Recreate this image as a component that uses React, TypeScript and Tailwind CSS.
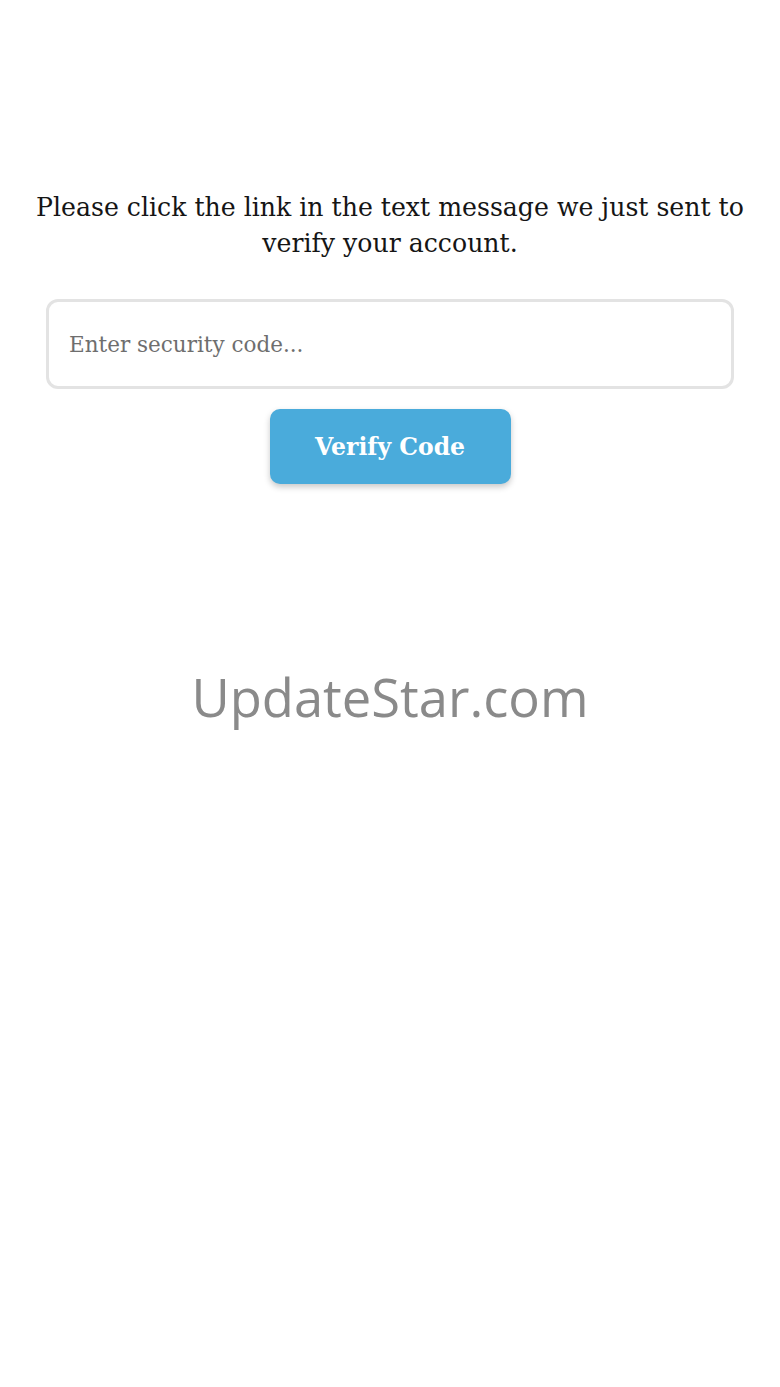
export default function App() {
  return (
    <div className="min-h-[1387px] w-full bg-white flex flex-col items-center pt-[190px]">
      <p className="px-[28px] text-center text-[25.2px] leading-[36px] text-[#151515] font-['DejaVu_Serif',serif]">
        Please click the link in the text message we just sent to verify your account.
      </p>

      <input
        type="text"
        placeholder="Enter security code..."
        className="mt-[37px] w-[688px] h-[90px] rounded-[12px] border-[3px] border-[#e3e3e3] bg-white px-[20px] text-[21.5px] text-[#333] placeholder:text-[#6e6e6e] outline-none font-['DejaVu_Serif',serif]"
      />

      <button className="mt-[20px] w-[241px] h-[75px] pt-[3px] rounded-[10px] bg-[#4aabdb] text-white text-[23.5px] font-bold shadow-[0_3px_6px_rgba(0,0,0,0.22)] font-['DejaVu_Serif',serif]">
        Verify Code
      </button>

      <div className="mt-[183px] h-[60px] leading-[60px] text-[52.5px] text-[#8a8a8a] font-['Open_Sans',sans-serif]">
        UpdateStar.com
      </div>
    </div>
  );
}
